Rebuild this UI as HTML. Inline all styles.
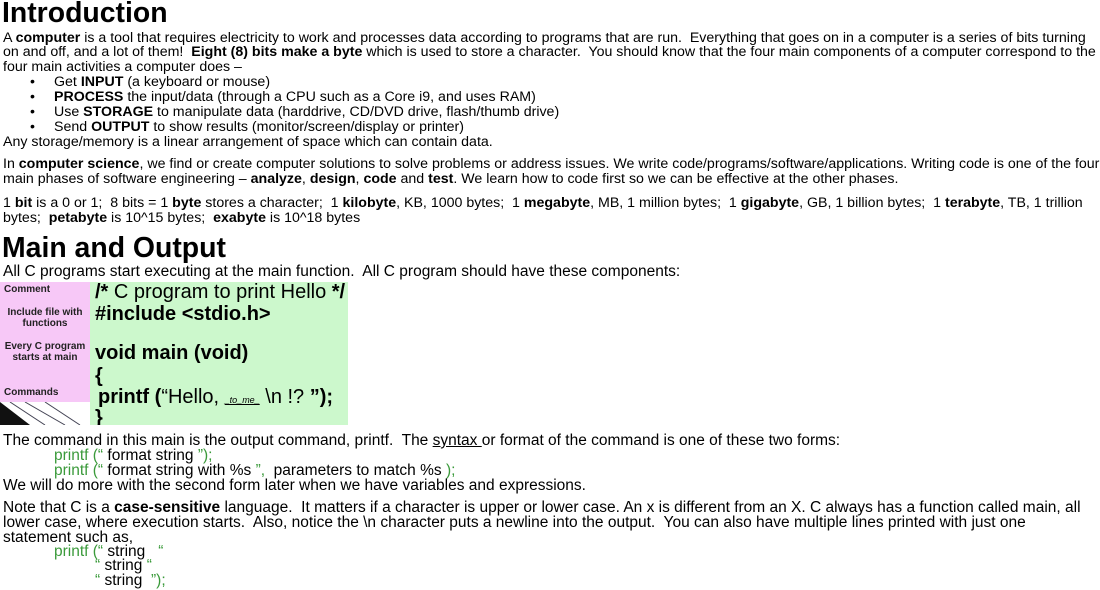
<!DOCTYPE html>
<html><head><meta charset="utf-8"><style>
body{margin:0;width:1100px;height:590px;background:#fff;position:relative;overflow:hidden;font-family:"Liberation Sans",Arial,sans-serif;color:#000}
.l{position:absolute;white-space:nowrap;font-size:14.2px;line-height:15px}
.b{font-size:15.5px}
h1{position:absolute;margin:0;font-size:28.4px;line-height:26px;font-weight:bold;white-space:nowrap}
.g{color:#3a9a3a}
.c{position:absolute;font-size:20px;line-height:20px;white-space:nowrap}
.lab{position:absolute;font-size:10px;line-height:11px;font-weight:bold;color:#222}
</style></head><body>
<h1 style="left:2px;top:0">Introduction</h1>
<div class="l" style="left:3px;top:31px">A <b>computer</b> is a tool that requires electricity to work and processes data according to programs that are run.&nbsp; Everything that goes on in a computer is a series of bits turning</div>
<div class="l" style="left:3px;top:45px">on and off, and a lot of them!&nbsp; <b>Eight (8) bits make a byte</b> which is used to store a character.&nbsp; You should know that the four main components of a computer correspond to the</div>
<div class="l" style="left:3px;top:60px">four main activities a computer does –</div>
<div class="l" style="left:30px;top:75px">•</div><div class="l" style="left:54px;top:75px">Get <b>INPUT</b> (a keyboard or mouse)</div>
<div class="l" style="left:30px;top:90px">•</div><div class="l" style="left:54px;top:90px"><b>PROCESS</b> the input/data (through a CPU such as a Core i9, and uses RAM)</div>
<div class="l" style="left:30px;top:105px">•</div><div class="l" style="left:54px;top:105px">Use <b>STORAGE</b> to manipulate data (harddrive, CD/DVD drive, flash/thumb drive)</div>
<div class="l" style="left:30px;top:120px">•</div><div class="l" style="left:54px;top:120px">Send <b>OUTPUT</b> to show results (monitor/screen/display or printer)</div>
<div class="l" style="left:3px;top:135px">Any storage/memory is a linear arrangement of space which can contain data.</div>
<div class="l" style="left:3px;top:157px">In <b>computer science</b>, we find or create computer solutions to solve problems or address issues. We write code/programs/software/applications. Writing code is one of the four</div>
<div class="l" style="left:3px;top:172px">main phases of software engineering – <b>analyze</b>, <b>design</b>, <b>code</b> and <b>test</b>. We learn how to code first so we can be effective at the other phases.</div>
<div class="l" style="left:3px;top:196px">1 <b>bit</b> is a 0 or 1;&nbsp; 8 bits = 1 <b>byte</b> stores a character;&nbsp; 1 <b>kilobyte</b>, KB, 1000 bytes;&nbsp; 1 <b>megabyte</b>, MB, 1 million bytes;&nbsp; 1 <b>gigabyte</b>, GB, 1 billion bytes;&nbsp; 1 <b>terabyte</b>, TB, 1 trillion</div>
<div class="l" style="left:3px;top:211px">bytes;&nbsp; <b>petabyte</b> is 10^15 bytes;&nbsp; <b>exabyte</b> is 10^18 bytes</div>
<h1 style="left:2px;top:235px">Main and Output</h1>
<div class="l b" style="left:3px;top:264px">All C programs start executing at the main function.&nbsp; All C program should have these components:</div>

<div style="position:absolute;left:0;top:282px;width:90px;height:120px;background:#f7c8f7"></div>
<div style="position:absolute;left:0;top:402px;width:90px;height:23px;background:#fff;overflow:hidden">
<svg width="90" height="23"><polygon points="0,0 0,23 30,23" fill="#111"/><path d="M10,0 L45,23 M25,0 L65,23 M45,0 L80,23" stroke="#445" stroke-width="1" fill="none"/></svg></div>
<div style="position:absolute;left:90px;top:282px;width:258px;height:143px;background:#ccf8cc"></div>
<div class="lab" style="left:4px;top:284px">Comment</div>
<div class="lab" style="left:0;top:307px;width:90px;text-align:center">Include file with<br>functions</div>
<div class="lab" style="left:0;top:341px;width:90px;text-align:center">Every C program<br>starts at main</div>
<div class="lab" style="left:4px;top:387px">Commands</div>
<div class="c" style="left:95px;top:282px"><b>/*</b> C program to print Hello <b>*/</b></div>
<div class="c" style="left:95px;top:304px;font-weight:bold">#include &lt;stdio.h&gt;</div>
<div class="c" style="left:95px;top:343px;font-weight:bold">void main (void)</div>
<div class="c" style="left:95px;top:366px;font-weight:bold">{</div>
<div class="c" style="left:98px;top:387px"><b>printf (</b>“Hello, <i style="font-size:9px;text-decoration:underline">_to_me_</i> \n !? <b>”);</b></div>
<div class="c" style="left:95px;top:408px;font-weight:bold;height:17px;overflow:hidden">}</div>

<div class="l b" style="left:3px;top:433px">The command in this main is the output command, printf.&nbsp; The <u>syntax </u>or format of the command is one of these two forms:</div>
<div class="l b" style="left:54px;top:448px"><span class="g">printf (“</span> format string <span class="g">”);</span></div>
<div class="l b" style="left:54px;top:463px"><span class="g">printf (“</span> format string with %s <span class="g">”,</span>&nbsp; parameters to match %s <span class="g">);</span></div>
<div class="l b" style="left:3px;top:478px">We will do more with the second form later when we have variables and expressions.</div>
<div class="l b" style="left:3px;top:500px">Note that C is a <b>case-sensitive</b> language.&nbsp; It matters if a character is upper or lower case. An x is different from an X. C always has a function called main, all</div>
<div class="l b" style="left:3px;top:515px">lower case, where execution starts.&nbsp; Also, notice the \n character puts a newline into the output.&nbsp; You can also have multiple lines printed with just one</div>
<div class="l b" style="left:3px;top:530px">statement such as,</div>
<div class="l b" style="left:54px;top:544px"><span class="g">printf (“</span> string &nbsp; <span class="g">“</span></div>
<div class="l b" style="left:95px;top:558px"><span class="g">“</span> string <span class="g">“</span></div>
<div class="l b" style="left:95px;top:573px"><span class="g">“</span> string &nbsp;<span class="g">”);</span></div>
</body></html>
